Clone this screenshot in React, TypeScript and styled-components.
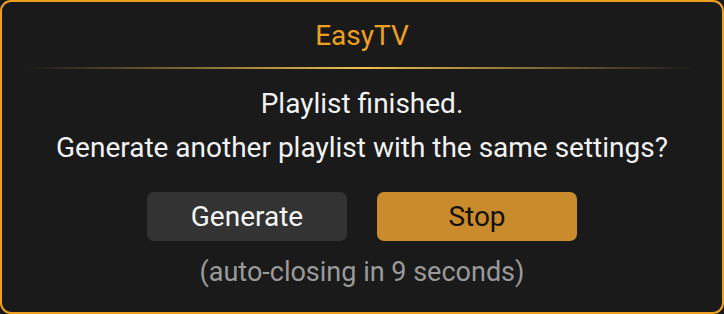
import React from "react";
import styled, { createGlobalStyle } from "styled-components";

const Global = createGlobalStyle`
  html, body { margin: 0; padding: 0; background: #1a1a1a; }
  body { font-family: Roboto, "Noto Sans", sans-serif; }
`;

const Dialog = styled.div`
  box-sizing: border-box;
  width: 724px;
  height: 314px;
  border: 2px solid #f0a020;
  border-radius: 11px;
  background: #1a1a1a;
  display: flex;
  flex-direction: column;
  align-items: center;
`;

const Title = styled.div`
  color: #f0a020;
  font-size: 28px;
  line-height: 30px;
  margin-top: 19px;
`;

const Divider = styled.div`
  width: 668px;
  height: 2px;
  margin-top: 16px;
  background: linear-gradient(90deg, rgba(200,160,60,0) 0%, #f0c050 50%, rgba(200,160,60,0) 100%);
`;

const Message = styled.div`
  color: #f2f2f2;
  font-size: 28px;
  line-height: 44px;
  text-align: center;
  margin-top: 13px;
`;

const Buttons = styled.div`
  display: flex;
  gap: 30px;
  margin-top: 22px;
`;

const Button = styled.button<{ $primary?: boolean }>`
  width: 200px;
  height: 49px;
  border: none;
  border-radius: 7px;
  font-family: inherit;
  font-size: 28px;
  background: ${(p) => (p.$primary ? "#c98b2b" : "#333333")};
  color: ${(p) => (p.$primary ? "#111111" : "#f5f5f5")};
  padding: 0;
`;

const Countdown = styled.div`
  color: #9a9a9a;
  font-size: 27px;
  line-height: 30px;
  margin-top: 16px;
`;

export default function App() {
  return (
    <>
      <Global />
      <Dialog>
        <Title>EasyTV</Title>
        <Divider />
        <Message>
          Playlist finished.
          <br />
          Generate another playlist with the same settings?
        </Message>
        <Buttons>
          <Button>Generate</Button>
          <Button $primary>Stop</Button>
        </Buttons>
        <Countdown>(auto-closing in 9 seconds)</Countdown>
      </Dialog>
    </>
  );
}
